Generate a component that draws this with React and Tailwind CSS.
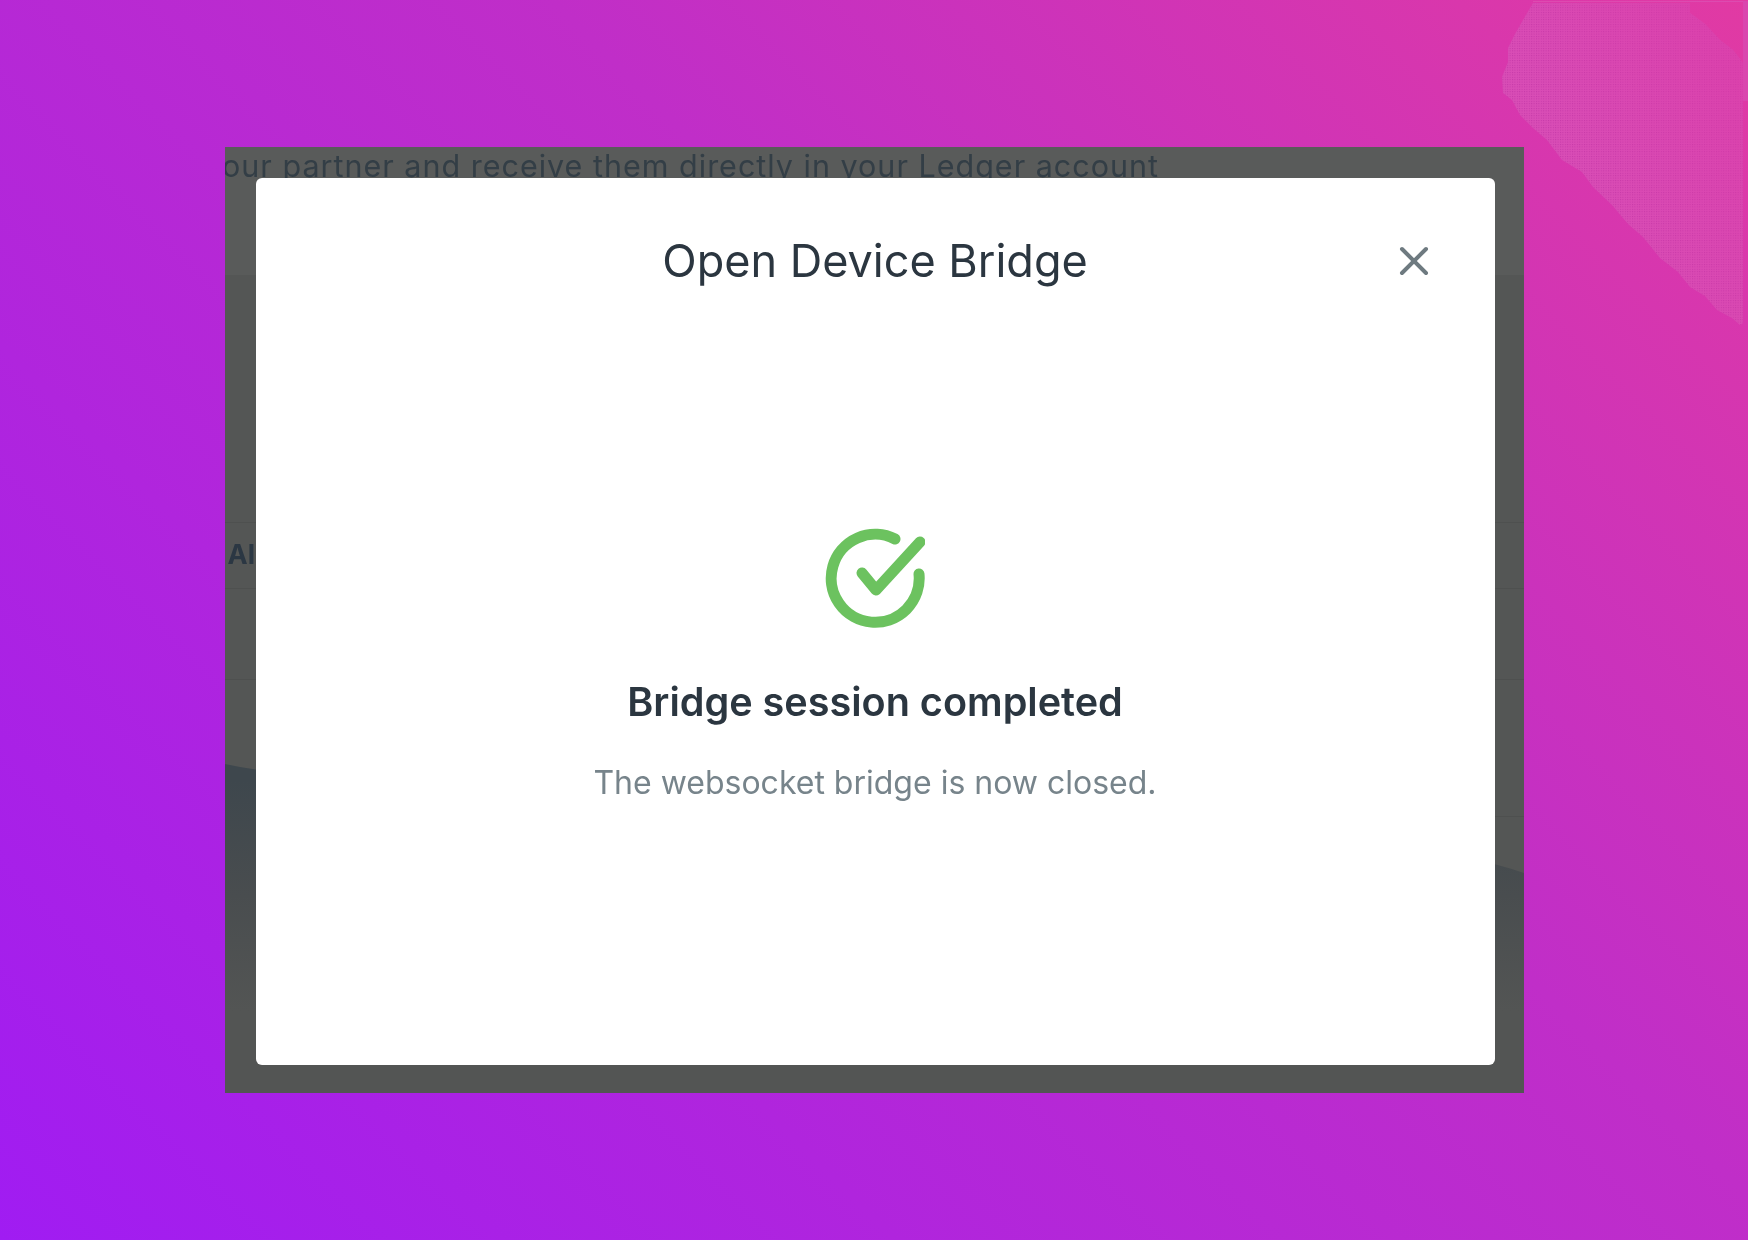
function CheckIcon() {
  return (
    <svg className="w-[100px] h-[100px] blur-[0.4px]" viewBox="0 0 100 100" fill="none" stroke="#6cc25f" strokeWidth="11" strokeLinecap="round" strokeLinejoin="round">
      <path d="M70 11A44 44 0 1 0 94 46" />
      <path d="M37 45L51 62L95 14" />
    </svg>
  );
}

function CloseIcon() {
  return (
    <svg className="w-[32px] h-[32px] blur-[0.5px]" viewBox="0 0 32 32" fill="none" stroke="#6e7a80" strokeWidth="4" strokeLinecap="round">
      <path d="M4 4L28 28M28 4L4 28" />
    </svg>
  );
}

// dithered blob in the top right corner
function CornerDither() {
  return (
    <svg className="absolute top-0 right-0 w-[248px] h-[330px]" viewBox="0 0 248 330">
      <defs>
        <pattern id="dither" width="2.4" height="2.4" patternUnits="userSpaceOnUse">
          <rect width="2.4" height="2.4" fill="#d94db6" />
          <rect width="1" height="1" fill="#c438a8" />
        </pattern>
        <linearGradient id="ditherFade" x1="0.25" y1="0.45" x2="0.85" y2="0">
          <stop offset="0" stopColor="#dd3aa6" stopOpacity="0" />
          <stop offset="1" stopColor="#dd3aa6" stopOpacity="0.6" />
        </linearGradient>
      </defs>
      <g>
        <polygon
          fill="url(#dither)"
          points="33,3 190,3 190,13 205,24 220,40 233,50 243,63 243,323 240,325 232,318 217,310 205,296 190,287 178,272 160,258 143,237 128,224 112,205 93,187 82,172 62,160 47,140 33,128 20,115 12,100 3,93 2,77 8,62 8,48 15,34 23,20"
        />
        <polygon
          fill="url(#ditherFade)"
          points="33,3 190,3 190,13 205,24 220,40 233,50 243,63 243,323 240,325 232,318 217,310 205,296 190,287 178,272 160,258 143,237 128,224 112,205 93,187 82,172 62,160 47,140 33,128 20,115 12,100 3,93 2,77 8,62 8,48 15,34 23,20"
        />
      </g>
      <rect x="33" y="1" width="215" height="1" fill="#dd4bb0" />
      <rect x="243" y="1" width="5" height="100" fill="#da46ae" />
    </svg>
  );
}

// the blurred app page that sits behind the dialog
function PageBehind() {
  return (
    <div className="absolute inset-0 flex flex-col bg-[#545655]">
      <div className="h-[128px] bg-[#595b5a] overflow-hidden">
        <p className="-ml-[20px] mt-[1px] whitespace-nowrap text-[30.5px] leading-[36px] tracking-[1px] text-[#333e46] blur-[0.7px]">
          your partner and receive them directly in your Ledger account
        </p>
      </div>
      <div className="h-[247px]" />
      <div className="h-[67px] flex items-center pl-[3px] border-y border-[#4e504f] text-[27px] font-bold text-[#2b3743] blur-[0.7px]">
        All
      </div>
      <div className="h-[91px] border-b border-[#4e504f]" />
      <div className="h-[137px] border-b border-[#4e504f]" />
      <div className="h-[134px] border-b border-[#515352]" />
      <div className="h-[135px] border-b border-[#4e504f]" />
      <svg className="absolute left-0 top-[617px] w-[1299px] h-[329px]" viewBox="0 0 1299 329" preserveAspectRatio="none">
        <defs>
          <linearGradient id="wave" x1="0" y1="0" x2="0" y2="1">
            <stop offset="0.05" stopColor="#3e474d" />
            <stop offset="0.4" stopColor="#494d4f" />
            <stop offset="0.75" stopColor="#535554" />
          </linearGradient>
        </defs>
        <path d="M0 0C300 60 1000 10 1299 109V329H0Z" fill="url(#wave)" />
      </svg>
    </div>
  );
}

export default function App() {
  return (
    <div className="relative w-full min-h-screen flex items-center justify-center overflow-hidden bg-[linear-gradient(45deg,#a01cf2_0%,#c02ec8_60%,#e13aa3_100%)] font-['Inter',sans-serif]">
      <CornerDither />
      <div className="relative w-[1299px] h-[946px] flex items-center justify-center overflow-hidden">
        <PageBehind />
        <div className="relative ml-[2px] mt-[2px] w-[1239px] h-[887px] flex flex-col items-center rounded-[6px] bg-white">
          <div className="w-full h-[166px] grid grid-cols-[1fr_auto_1fr] items-center">
            <div />
            <h2 className="text-[45px] leading-[50px] font-normal text-[#2b3640] blur-[0.5px]">Open Device Bridge</h2>
            <div className="flex justify-end pr-[65px]">
              <CloseIcon />
            </div>
          </div>
          <div className="mt-[184px] flex flex-col items-center">
            <CheckIcon />
            <h3 className="mt-[51px] text-[39.6px] leading-[46px] font-semibold text-[#2b3640] blur-[0.5px]">Bridge session completed</h3>
            <p className="mt-[39px] text-[32px] leading-[38px] text-[#77848b] blur-[0.5px]">The websocket bridge is now closed.</p>
          </div>
        </div>
      </div>
    </div>
  );
}
